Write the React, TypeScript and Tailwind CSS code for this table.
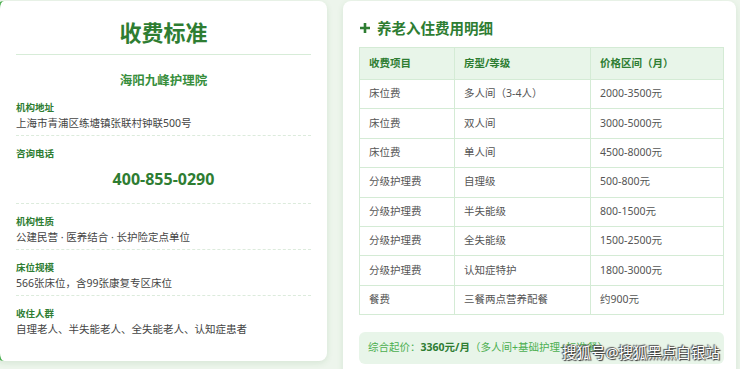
const font = { fontFamily: '"Noto Sans", "Noto Sans CJK SC", sans-serif' };

const rows = [
  ['床位费', '多人间（3-4人）', '2000-3500元'],
  ['床位费', '双人间', '3000-5000元'],
  ['床位费', '单人间', '4500-8000元'],
  ['分级护理费', '自理级', '500-800元'],
  ['分级护理费', '半失能级', '800-1500元'],
  ['分级护理费', '全失能级', '1500-2500元'],
  ['分级护理费', '认知症特护', '1800-3000元'],
  ['餐费', '三餐两点营养配餐', '约900元'],
];

function Item({ label, value, last }: { label: string; value: string; last?: boolean }) {
  return (
    <div className={`pt-[11px] pb-[4px] ${last ? '' : 'border-b border-dashed border-[#dcebdc]'}`}>
      <div className="text-[9.5px] leading-[13px] font-bold text-[#2e7d32]">{label}</div>
      <div className="mt-[2px] text-[10.5px] leading-[15px] text-[#444]">{value}</div>
    </div>
  );
}

export default function App() {
  return (
    <div className="relative h-[369px] w-[740px] overflow-hidden bg-[#edf5ec]" style={font}>
      <div className="-ml-1 flex items-start gap-4 pt-[1px]">
        <div className="w-[331px] shrink-0 rounded-lg border-l-4 border-[#4caf50] bg-white px-4 pt-4 pb-5 shadow-[0_2px_6px_rgba(46,125,50,0.12)]">
          <div className="border-b border-[#d7ecd8] pb-[7px] text-center text-[22px] leading-[30px] font-bold text-[#2e7d32]">
            收费标准
          </div>
          <div className="pt-[17px] text-center text-[12.5px] leading-[18px] font-bold text-[#388e3c]">
            海阳九峰护理院
          </div>
          <Item label="机构地址" value="上海市青浦区练塘镇张联村钟联500号" />
          <div className="border-b border-dashed border-[#dcebdc] pt-[11px] pb-[12px]">
            <div className="text-[9.5px] leading-[13px] font-bold text-[#2e7d32]">咨询电话</div>
            <div className="mt-[7px] text-center text-[16px] leading-[24px] font-bold text-[#2e7d32]">
              400-855-0290
            </div>
          </div>
          <Item label="机构性质" value="公建民营 · 医养结合 · 长护险定点单位" />
          <Item label="床位规模" value="566张床位，含99张康复专区床位" />
          <Item label="收住人群" value="自理老人、半失能老人、全失能老人、认知症患者" last />
        </div>

        <div className="w-[393px] shrink-0 rounded-lg bg-white pt-4 pr-3 pb-4 pl-4 shadow-[0_2px_6px_rgba(46,125,50,0.12)]">
          <div className="flex items-center gap-[6px] text-[14.5px] leading-[22px] font-bold text-[#2e7d32]">
            <svg width="12" height="12" viewBox="0 0 12 12">
              <path d="M6 1v10M1 6h10" stroke="#2e7d32" strokeWidth="2.6" />
            </svg>
            <span>养老入住费用明细</span>
          </div>
          <table className="mt-2 w-[365px] border-collapse text-[10.5px] text-[#555]">
            <thead>
              <tr className="h-[32px] bg-[#e8f5e9]">
                <th className="w-[95px] border border-[#d4ebd5] pl-[9px] text-left font-bold text-[#2e7d32]">收费项目</th>
                <th className="w-[136px] border border-[#d4ebd5] pl-[9px] text-left font-bold text-[#2e7d32]">房型/等级</th>
                <th className="border border-[#d4ebd5] pl-[9px] text-left font-bold text-[#2e7d32]">价格区间（月）</th>
              </tr>
            </thead>
            <tbody>
              {rows.map((r, i) => (
                <tr key={i} className="h-[29.4px]">
                  {r.map((c, j) => (
                    <td key={j} className="border border-[#d4ebd5] pl-[9px]">
                      {c}
                    </td>
                  ))}
                </tr>
              ))}
            </tbody>
          </table>
          <div className="mt-[17px] flex h-[32px] w-[365px] items-center rounded-md bg-[#e8f5e9] pl-[9px] text-[10.5px] text-[#4caf50]">
            综合起价：<span className="font-bold text-[#2e7d32]">3360元/月</span>（多人间+基础护理+标准餐）
          </div>
        </div>
      </div>

      <div
        className="absolute top-[342px] left-[562px] text-[14.5px] leading-[20px] text-white"
        style={{ textShadow: '0 0 1px #333, 1px 1px 1px #333, -1px -1px 1px #555' }}
      >
        搜狐号@搜狐黑点白银站
      </div>
    </div>
  );
}
